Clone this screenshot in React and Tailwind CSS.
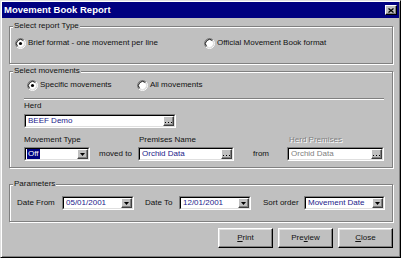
import React from 'react';

const face = "font-['Liberation_Sans',Arial,sans-serif]";

function Radio({ checked }) {
  return (
    <svg width="11" height="11" viewBox="0 0 12 12" className="shrink-0">
      <circle cx="6" cy="6" r="4.5" fill="#fff" />
      <path d="M2.11 9.89 A5.5 5.5 0 0 1 9.89 2.11" fill="none" stroke="#808080" strokeWidth="1" />
      <path d="M9.89 2.11 A5.5 5.5 0 0 1 2.11 9.89" fill="none" stroke="#fff" strokeWidth="1" />
      <path d="M2.82 9.18 A4.5 4.5 0 0 1 9.18 2.82" fill="none" stroke="#000" strokeWidth="1" />
      <path d="M9.18 2.82 A4.5 4.5 0 0 1 2.82 9.18" fill="none" stroke="#dfdfdf" strokeWidth="1" />
      {checked && <circle cx="6" cy="6" r="1.7" fill="#000" />}
    </svg>
  );
}

function GroupBox({ label, className, children }) {
  return (
    <div className={`relative w-[384px] border border-[#808080] shadow-[inset_1px_1px_0_#fff,1px_1px_0_#fff] ${className}`}>
      <span className="absolute -top-[6px] left-[3px] px-[1px] bg-[#c0c0c0] leading-[10px] text-[8px] text-[#111]">
        {label}
      </span>
      {children}
    </div>
  );
}

function Sunken({ className, children }) {
  return (
    <div className={`h-[14px] border border-t-[#808080] border-l-[#808080] border-b-white border-r-white ${className}`}>
      <div className="h-full flex items-stretch bg-white border border-t-black border-l-black border-b-[#dfdfdf] border-r-[#dfdfdf]">
        {children}
      </div>
    </div>
  );
}

function SmallButton({ children }) {
  return (
    <div className="w-[11px] shrink-0 flex items-center justify-center bg-[#c0c0c0] border border-t-white border-l-white border-b-[#404040] border-r-[#404040] shadow-[inset_-1px_-1px_0_#808080]">
      {children}
    </div>
  );
}

function Ellipsis() {
  return (
    <SmallButton>
      <svg width="7" height="3" viewBox="0 0 7 3" className="mt-[2px]">
        <rect x="0" y="1" width="1" height="1" fill="#000" />
        <rect x="3" y="1" width="1" height="1" fill="#000" />
        <rect x="6" y="1" width="1" height="1" fill="#000" />
      </svg>
    </SmallButton>
  );
}

function Arrow() {
  return (
    <SmallButton>
      <svg width="5" height="3" viewBox="0 0 5 3">
        <path d="M0 0 H5 L2.5 3 Z" fill="#000" />
      </svg>
    </SmallButton>
  );
}

function FieldText({ children, disabled }) {
  return (
    <div className={`flex-1 flex items-center pl-[2px] text-[8px] leading-[10px] overflow-hidden whitespace-nowrap ${disabled ? 'text-[#808080]' : 'text-[#1a1a8a]'}`}>
      {children}
    </div>
  );
}

function Button({ children }) {
  return (
    <button className="w-[55px] h-[20px] flex items-center justify-center bg-[#c0c0c0] text-[8px] leading-[10px] text-[#111] border border-t-white border-l-white border-b-black border-r-black shadow-[inset_-1px_-1px_0_#808080,inset_1px_1px_0_#dfdfdf]">
      {children}
    </button>
  );
}

export default function App() {
  return (
    <div className={`${face} w-[401px] h-[258px] bg-[#c0c0c0] border border-t-[#dfdfdf] border-l-[#dfdfdf] border-r-black border-b-black shadow-[inset_1px_1px_0_#fff,inset_-1px_-1px_0_#808080] p-[1px] overflow-hidden`}>
      <div className="h-[16px] bg-[#000080] flex items-center justify-between pl-[2px] pr-[2px]">
        <span className="text-white font-bold text-[9.5px] leading-[12px]">Movement Book Report</span>
        <div className="w-[12px] h-[10px] flex items-center justify-center bg-[#c0c0c0] border border-t-white border-l-white border-b-black border-r-black shadow-[inset_-1px_-1px_0_#808080]">
          <svg width="6" height="5" viewBox="0 0 6 5">
            <path d="M0.5 0.5 L5.5 4.5 M5.5 0.5 L0.5 4.5" stroke="#000" strokeWidth="1.3" />
          </svg>
        </div>
      </div>

      <div className="pl-[7px] text-[8px] leading-[10px] text-[#111]">
        <GroupBox label="Select report Type" className="mt-[8px] h-[38px]">
          <div className="mt-[10px] pl-[5px] h-[12px] flex items-center">
            <div className="w-[189px] flex items-center gap-[2px]">
              <Radio checked />
              <span>Brief format - one movement per line</span>
            </div>
            <div className="flex items-center gap-[2px]">
              <Radio />
              <span>Official Movement Book format</span>
            </div>
          </div>
        </GroupBox>

        <GroupBox label="Select movements" className="mt-[7px] h-[97px]">
          <div className="pl-[14px]">
            <div className="mt-[7px] pl-[3px] h-[12px] flex items-center">
              <div className="w-[110px] flex items-center gap-[2px]">
                <Radio checked />
                <span>Specific movements</span>
              </div>
              <div className="flex items-center gap-[2px]">
                <Radio />
                <span>All movements</span>
              </div>
            </div>
            <div className="mt-[7px] w-[360px] border-t border-t-[#808080] border-b border-b-white" />
            <div className="mt-[1px] h-[10px]">Herd</div>
            <Sunken className="mt-[3px] w-[152px]">
              <FieldText>BEEF Demo</FieldText>
              <Ellipsis />
            </Sunken>
            <div className="mt-[7px] flex items-end">
              <div className="w-[75px]">
                <div className="h-[10px]">Movement Type</div>
                <Sunken className="mt-[2px] w-[66px]">
                  <div className="flex-1 flex items-center pl-[1px]">
                    <span className="h-full flex items-center px-[1px] bg-[#000080] text-white">Off</span>
                  </div>
                  <Arrow />
                </Sunken>
              </div>
              <div className="w-[39px] h-[14px] flex items-center">moved to</div>
              <div className="w-[115px]">
                <div className="h-[10px] pl-[1px]">Premises Name</div>
                <Sunken className="mt-[2px] w-[96px]">
                  <FieldText>Orchid Data</FieldText>
                  <Ellipsis />
                </Sunken>
              </div>
              <div className="w-[34px] h-[14px] flex items-center">from</div>
              <div className="w-[97px]">
                <div className="h-[10px] pl-[2px] text-[#808080] [text-shadow:1px_1px_0_#fff]">Herd Premises</div>
                <Sunken className="mt-[2px] w-[97px]">
                  <FieldText disabled>Orchid Data</FieldText>
                  <Ellipsis />
                </Sunken>
              </div>
            </div>
          </div>
        </GroupBox>

        <GroupBox label="Parameters" className="mt-[16px] h-[38px]">
          <div className="mt-[11px] pl-[7px] h-[14px] flex items-center">
            <div className="w-[45px]">Date From</div>
            <Sunken className="w-[72px]">
              <FieldText>05/01/2001</FieldText>
              <Arrow />
            </Sunken>
            <div className="ml-[11px] w-[34px]">Date To</div>
            <Sunken className="w-[72px]">
              <FieldText>12/01/2001</FieldText>
              <Arrow />
            </Sunken>
            <div className="ml-[12px] w-[41px]">Sort order</div>
            <Sunken className="w-[81px]">
              <FieldText>Movement Date</FieldText>
              <Arrow />
            </Sunken>
          </div>
        </GroupBox>

        <div className="mt-[6px] w-[384px] flex justify-end gap-[5px]">
          <Button><span className="underline">P</span>rint</Button>
          <Button>Pre<span className="underline">v</span>iew</Button>
          <Button><span className="underline">C</span>lose</Button>
        </div>
      </div>
    </div>
  );
}
